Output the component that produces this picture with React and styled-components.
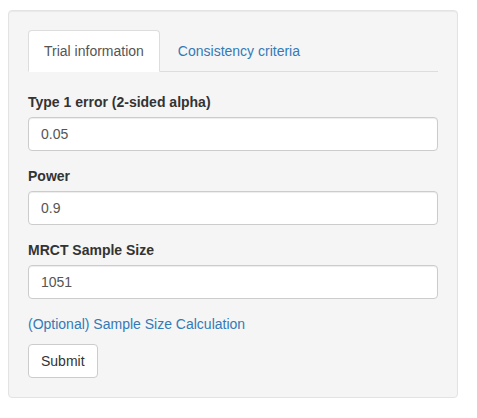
import React from 'react';
import styled, { createGlobalStyle } from 'styled-components';

const GlobalStyle = createGlobalStyle`
  * { box-sizing: border-box; }
  body {
    margin: 0;
    padding: 10px 8px 8px 8px;
    background: #fff;
    font-family: "Liberation Sans", Arial, sans-serif;
    font-size: 14px;
    line-height: 20px;
    color: #333;
  }
`;

const fields = [
  { label: 'Type 1 error (2-sided alpha)', value: '0.05' },
  { label: 'Power', value: '0.9' },
  { label: 'MRCT Sample Size', value: '1051' },
];

const App = () => {
  const [active, setActive] = React.useState(0);

  return (
    <>
      <GlobalStyle />
      <Well>
        <Tabs>
          <Tab active={active === 0} onClick={() => setActive(0)}>
            Trial information
          </Tab>
          <Tab active={active === 1} onClick={() => setActive(1)}>
            Consistency criteria
          </Tab>
        </Tabs>
        <TabContent>
          {fields.map((f, i) => (
            <FormGroup key={i}>
              <Label>{f.label}</Label>
              <Input type="text" defaultValue={f.value} />
            </FormGroup>
          ))}
          <Para>
            <LinkText href="#">(Optional) Sample Size Calculation</LinkText>
          </Para>
          <Button type="button">Submit</Button>
        </TabContent>
      </Well>
    </>
  );
};

const Well = styled.div`
  width: 450px;
  padding: 19px;
  background-color: #f5f5f5;
  border: 1px solid #e3e3e3;
  border-radius: 4px;
  box-shadow: inset 0 1px 1px rgba(0, 0, 0, 0.05);
`;

const Tabs = styled.div`
  display: flex;
  border-bottom: 1px solid #ddd;
`;

const Tab = styled.div`
  margin-right: 2px;
  margin-bottom: -1px;
  padding: 10px 15px;
  line-height: 20px;
  border: 1px solid ${props => (props.active ? '#ddd' : 'transparent')};
  border-bottom-color: transparent;
  border-radius: 4px 4px 0 0;
  background-color: ${props => (props.active ? '#fff' : 'transparent')};
  color: ${props => (props.active ? '#555' : '#337ab7')};
  cursor: pointer;
`;

const TabContent = styled.div`
  padding-top: 20px;
`;

const FormGroup = styled.div`
  margin-bottom: 15px;
`;

const Label = styled.label`
  display: inline-block;
  margin-bottom: 5px;
  font-weight: 700;
  color: #333;
`;

const Input = styled.input`
  display: block;
  width: 100%;
  height: 34px;
  padding: 6px 12px;
  font-family: inherit;
  font-size: 14px;
  line-height: 20px;
  color: #555;
  background-color: #fff;
  border: 1px solid #ccc;
  border-radius: 4px;
  box-shadow: inset 0 1px 1px rgba(0, 0, 0, 0.075);
  outline: none;
`;

const Para = styled.p`
  margin: 0 0 10px;
`;

const LinkText = styled.a`
  color: #337ab7;
  text-decoration: none;
`;

const Button = styled.button`
  display: block;
  height: 34px;
  padding: 6px 12px;
  font-family: inherit;
  font-size: 14px;
  line-height: 20px;
  color: #333;
  background-color: #fff;
  border: 1px solid #ccc;
  border-radius: 4px;
  cursor: pointer;
`;

export default App;
